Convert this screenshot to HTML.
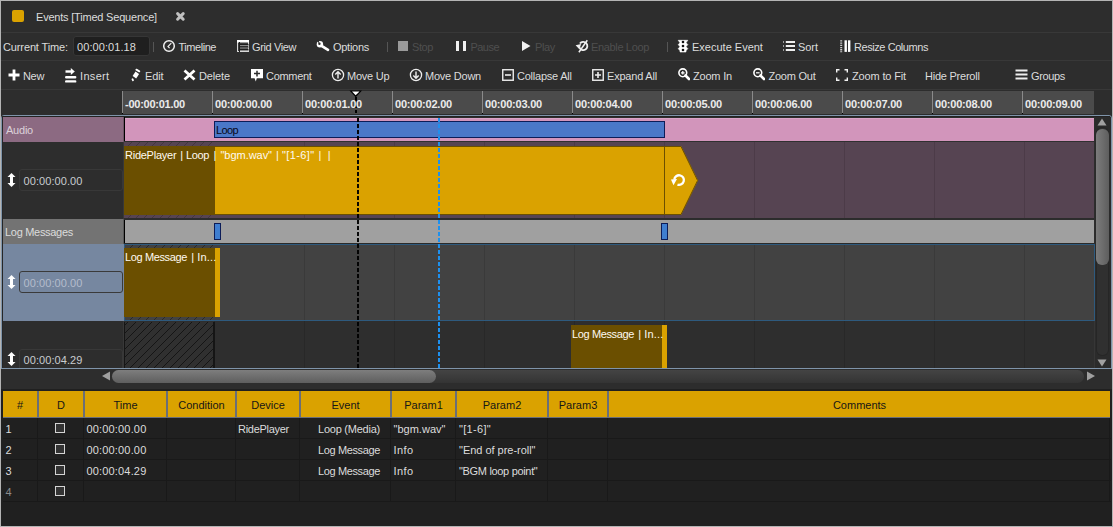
<!DOCTYPE html>
<html><head><meta charset="utf-8"><style>
html,body{margin:0;padding:0;}
body{width:1113px;height:527px;position:relative;overflow:hidden;background:#2d2d2d;font-family:"Liberation Sans",sans-serif;font-size:11px;}
body>div,body>svg{position:absolute;}
.t{white-space:nowrap;line-height:13px;height:13px;}
#win{left:0;top:0;width:1111px;height:525px;border:1px solid #b4b4b4;}
</style></head><body>
<div id="win"></div>
<div style="left:12px;top:10px;width:12px;height:12px;background:#daa200;border-radius:2px"></div>
<div class="t" style="left:36px;top:10.69px;color:#dcdcdc;letter-spacing:-0.202px;font-size:11px;">Events [Timed Sequence]</div>
<svg style="left:175px;top:11px;" width="11" height="11" viewBox="0 0 11 11"><path d="M2.6 2.6L8.2 8.2M8.2 2.6L2.6 8.2" stroke="#c0c0c0" stroke-width="3" stroke-linecap="round"/></svg>
<div style="left:1px;top:32px;width:1111px;height:1px;background:#383838;"></div>
<div class="t" style="left:3px;top:40.69px;color:#dcdcdc;letter-spacing:-0.126px;font-size:11px;">Current Time:</div>
<div style="left:73px;top:36px;width:77px;height:20px;background:#1f1f1f;border-radius:3px;box-sizing:border-box;border:1px solid #363636"></div>
<div class="t" style="left:77px;top:40.69px;color:#dcdcdc;letter-spacing:0.074px;font-size:11px;">00:00:01.18</div>
<div style="left:153px;top:42px;width:1px;height:10px;background:#555;"></div>
<svg style="left:162px;top:39px;" width="14" height="14" viewBox="0 0 14 14"><circle cx="7" cy="7" r="5.3" fill="none" stroke="#f0f0f0" stroke-width="1.5"/><path d="M9.3 4.2L6 7.6L7.6 9.2" stroke="#f0f0f0" stroke-width="1.2" fill="none"/></svg>
<div class="t" style="left:178.5px;top:40.69px;color:#dcdcdc;letter-spacing:-0.457px;font-size:11px;">Timeline</div>
<svg style="left:237px;top:40px;" width="12" height="12" viewBox="0 0 12 12"><rect x="0.5" y="0.5" width="11" height="11" fill="#3a3a3a" stroke="#d8d8d8"/><rect x="0" y="0" width="12" height="2.5" fill="#fff"/><path d="M2.5 2v10" stroke="#1e1e1e"/><path d="M3 4.5h8.5M3 7h8.5M3 9.5h8.5" stroke="#1e1e1e"/><path d="M3 5.5h8.5M3 8h8.5M3 10.5h8.5" stroke="#8a8a8a"/></svg>
<div class="t" style="left:252px;top:40.69px;color:#dcdcdc;letter-spacing:-0.387px;font-size:11px;">Grid View</div>
<svg style="left:316px;top:39px;" width="15" height="14" viewBox="0 0 15 14"><circle cx="3.9" cy="5.3" r="3.2" fill="#fff"/><path d="M4.8 6.3L12 10.8" stroke="#fff" stroke-width="2.7" stroke-linecap="round"/><circle cx="3.4" cy="4.8" r="1.2" fill="#2d2d2d"/><path d="M3.6 5L0.6 1.6L2.6 0.4Z" fill="#2d2d2d"/></svg>
<div class="t" style="left:333px;top:40.69px;color:#dcdcdc;letter-spacing:-0.277px;font-size:11px;">Options</div>
<div style="left:387px;top:42px;width:1px;height:10px;background:#555;"></div>
<div style="left:398px;top:41px;width:10px;height:10px;background:#9a9a9a;"></div>
<div class="t" style="left:412px;top:40.69px;color:#4f4f4f;letter-spacing:-0.414px;font-size:11px;">Stop</div>
<div style="left:456px;top:41px;width:3px;height:10px;background:#f0f0f0;"></div>
<div style="left:463px;top:41px;width:3px;height:10px;background:#f0f0f0;"></div>
<div class="t" style="left:470.5px;top:40.69px;color:#4f4f4f;letter-spacing:-0.544px;font-size:11px;">Pause</div>
<svg style="left:521px;top:40px;" width="10" height="12" viewBox="0 0 10 12"><path d="M1 1L9.5 6L1 11Z" fill="#f0f0f0"/></svg>
<div class="t" style="left:535px;top:40.69px;color:#4f4f4f;letter-spacing:-0.352px;font-size:11px;">Play</div>
<svg style="left:575px;top:39px;" width="14" height="14" viewBox="0 0 14 14"><path d="M4.9 4.6A4.1 4.1 0 1 1 4.4 8.4" stroke="#f0f0f0" stroke-width="1.8" fill="none"/><path d="M0.6 6.2L6.2 5.1L4.4 10.2Z" fill="#f0f0f0"/><path d="M12.3 1.2L3.9 13.3" stroke="#f0f0f0" stroke-width="1.5"/></svg>
<div class="t" style="left:591px;top:40.69px;color:#4f4f4f;letter-spacing:-0.349px;font-size:11px;">Enable Loop</div>
<div style="left:667px;top:42px;width:1px;height:10px;background:#555;"></div>
<svg style="left:677px;top:39px;" width="12" height="14" viewBox="0 0 12 14"><path d="M1.2 1.3H10.8L9 3.8L10.8 5.6L9 7.8L10.8 9.6L9 11.8V13H3V11.8L1.2 9.6L3 7.8L1.2 5.6L3 3.8Z" fill="#fff" stroke="#fff" stroke-width="0.6" stroke-linejoin="round"/><circle cx="6" cy="3" r="1.3" fill="#111"/><circle cx="6" cy="7" r="1.3" fill="#111"/><circle cx="6" cy="11" r="1.3" fill="#111"/></svg>
<div class="t" style="left:692px;top:40.69px;color:#dcdcdc;letter-spacing:0.000px;font-size:11px;">Execute Event</div>
<svg style="left:783px;top:40px;" width="13" height="13" viewBox="0 0 13 13"><path d="M2.8 2h9.2M2.8 6h9.2M2.8 10h9.2" stroke="#eee" stroke-width="1.8"/><path d="M0.5 1.2v1.6M0.5 5.2v1.6M0.5 9.2v1.6" stroke="#bbb" stroke-width="1"/></svg>
<div class="t" style="left:798px;top:40.69px;color:#dcdcdc;letter-spacing:-0.047px;font-size:11px;">Sort</div>
<svg style="left:839px;top:40px;" width="12" height="13" viewBox="0 0 12 13"><path d="M2.2 0.3v12" stroke="#ccc" stroke-width="2" stroke-dasharray="1.3 0.9"/><rect x="5.5" y="0.3" width="2.4" height="11.6" fill="#fff"/><rect x="9" y="0.3" width="2.4" height="11.6" fill="#fff"/></svg>
<div class="t" style="left:854px;top:40.69px;color:#dcdcdc;letter-spacing:-0.435px;font-size:11px;">Resize Columns</div>
<div style="left:1px;top:60px;width:1111px;height:1px;background:#383838;"></div>
<svg style="left:8px;top:69px;" width="12" height="12" viewBox="0 0 12 12"><path d="M6 0.5v11M0.5 6h11" stroke="#fff" stroke-width="2.8"/></svg>
<div class="t" style="left:23px;top:69.69px;color:#dcdcdc;letter-spacing:-0.333px;font-size:11px;">New</div>
<svg style="left:65px;top:68px;" width="12" height="15" viewBox="0 0 12 15"><path d="M0.5 3.5h6" stroke="#fff" stroke-width="2.4"/><path d="M5.8 0L9.8 3.5L5.8 7Z" fill="#fff"/><path d="M1.2 9.2h9M1.2 13.4h9" stroke="#fff" stroke-width="2.4" stroke-linecap="round"/></svg>
<div class="t" style="left:80px;top:69.69px;color:#dcdcdc;letter-spacing:0.328px;font-size:11px;">Insert</div>
<svg style="left:130px;top:68px;" width="11" height="14" viewBox="0 0 11 14"><path d="M6.4 1.7L9.3 3.3" stroke="#fff" stroke-width="1.9" stroke-linecap="round"/><path d="M7.3 4.8L4.4 9.2" stroke="#fff" stroke-width="4.3"/><path d="M2.5 11.3L3 12.2" stroke="#fff" stroke-width="1.8" stroke-linecap="round"/></svg>
<div class="t" style="left:145px;top:69.69px;color:#dcdcdc;letter-spacing:-0.117px;font-size:11px;">Edit</div>
<svg style="left:183px;top:69px;" width="13" height="12" viewBox="0 0 13 12"><path d="M1.5 1.5L11.5 10.5M11.5 1.5L1.5 10.5" stroke="#fff" stroke-width="2.8"/></svg>
<div class="t" style="left:199px;top:69.69px;color:#dcdcdc;letter-spacing:-0.135px;font-size:11px;">Delete</div>
<svg style="left:251px;top:69px;" width="13" height="14" viewBox="0 0 13 14"><path d="M0 0h12v9.2h-6.2l-1 3.2-1.2-3.2H0Z" fill="#fff"/><path d="M6 1.8v5.8M3 4.6h6" stroke="#2d2d2d" stroke-width="1.5"/></svg>
<div class="t" style="left:266px;top:69.69px;color:#dcdcdc;letter-spacing:-0.312px;font-size:11px;">Comment</div>
<svg style="left:331px;top:68px;" width="14" height="14" viewBox="0 0 14 14"><circle cx="7" cy="7" r="5.6" fill="none" stroke="#eee" stroke-width="1.3"/><path d="M7 10.5V4M4.3 6.5L7 3.7l2.7 2.8" stroke="#eee" stroke-width="1.4" fill="none"/></svg>
<div class="t" style="left:347px;top:69.69px;color:#dcdcdc;letter-spacing:-0.219px;font-size:11px;">Move Up</div>
<svg style="left:409px;top:68px;" width="14" height="14" viewBox="0 0 14 14"><circle cx="7" cy="7" r="5.6" fill="none" stroke="#eee" stroke-width="1.3"/><path d="M7 3.5V10M4.3 7.5L7 10.3l2.7-2.8" stroke="#eee" stroke-width="1.4" fill="none"/></svg>
<div class="t" style="left:425px;top:69.69px;color:#dcdcdc;letter-spacing:-0.233px;font-size:11px;">Move Down</div>
<svg style="left:502px;top:69px;" width="12" height="12" viewBox="0 0 12 12"><rect x="0.75" y="0.75" width="10.5" height="10.5" fill="none" stroke="#eee" stroke-width="1.4"/><path d="M3 6h6" stroke="#eee" stroke-width="1.6"/></svg>
<div class="t" style="left:517px;top:69.69px;color:#dcdcdc;letter-spacing:-0.232px;font-size:11px;">Collapse All</div>
<svg style="left:592px;top:69px;" width="12" height="12" viewBox="0 0 12 12"><rect x="0.75" y="0.75" width="10.5" height="10.5" fill="none" stroke="#eee" stroke-width="1.4"/><path d="M3 6h6M6 3v6" stroke="#eee" stroke-width="1.6"/></svg>
<div class="t" style="left:607px;top:69.69px;color:#dcdcdc;letter-spacing:-0.202px;font-size:11px;">Expand All</div>
<svg style="left:678px;top:68px;" width="12" height="13" viewBox="0 0 12 13"><circle cx="4.8" cy="4.8" r="3.9" fill="none" stroke="#fff" stroke-width="1.6"/><path d="M7.5 7.5L11 11" stroke="#fff" stroke-width="2.6" stroke-linecap="round"/><path d="M4.8 3v3.6M3 4.8h3.6" stroke="#fff" stroke-width="1.2"/></svg>
<div class="t" style="left:693px;top:69.69px;color:#dcdcdc;letter-spacing:-0.196px;font-size:11px;">Zoom In</div>
<svg style="left:753px;top:68px;" width="12" height="13" viewBox="0 0 12 13"><circle cx="4.8" cy="4.8" r="3.9" fill="none" stroke="#fff" stroke-width="1.6"/><path d="M7.5 7.5L11 11" stroke="#fff" stroke-width="2.6" stroke-linecap="round"/><path d="M3 4.8h3.6" stroke="#fff" stroke-width="1.2"/></svg>
<div class="t" style="left:768.5px;top:69.69px;color:#dcdcdc;letter-spacing:-0.242px;font-size:11px;">Zoom Out</div>
<svg style="left:836px;top:69px;" width="12" height="12" viewBox="0 0 12 12"><path d="M0 0h3.5v1.4H1.4v2.1H0ZM12 0H8.5v1.4h2.1v2.1H12ZM0 12h3.5v-1.4H1.4V8.5H0ZM12 12H8.5v-1.4h2.1V8.5H12Z" fill="#f2f2f2"/></svg>
<div class="t" style="left:852px;top:69.69px;color:#dcdcdc;letter-spacing:-0.151px;font-size:11px;">Zoom to Fit</div>
<div class="t" style="left:925px;top:69.69px;color:#dcdcdc;letter-spacing:-0.239px;font-size:11px;">Hide Preroll</div>
<svg style="left:1015px;top:69px;" width="13" height="11" viewBox="0 0 13 11"><path d="M0.5 1.5h12M0.5 5.5h12M0.5 9.5h12" stroke="#eee" stroke-width="2"/></svg>
<div class="t" style="left:1031px;top:69.69px;color:#dcdcdc;letter-spacing:-0.349px;font-size:11px;">Groups</div>
<div style="left:1px;top:89px;width:1111px;height:1px;background:#383838;"></div>
<div style="left:123px;top:91px;width:971px;height:23px;background:#4b4b4b;"></div>
<div style="left:122px;top:91px;width:1px;height:22px;background:#8a8a8a;"></div>
<div style="left:122px;top:113px;width:1px;height:1px;background:#000;"></div>
<div style="left:212px;top:91px;width:1px;height:22px;background:#8a8a8a;"></div>
<div style="left:212px;top:113px;width:1px;height:1px;background:#000;"></div>
<div style="left:302px;top:91px;width:1px;height:22px;background:#8a8a8a;"></div>
<div style="left:302px;top:113px;width:1px;height:1px;background:#000;"></div>
<div style="left:392px;top:91px;width:1px;height:22px;background:#8a8a8a;"></div>
<div style="left:392px;top:113px;width:1px;height:1px;background:#000;"></div>
<div style="left:482px;top:91px;width:1px;height:22px;background:#8a8a8a;"></div>
<div style="left:482px;top:113px;width:1px;height:1px;background:#000;"></div>
<div style="left:572px;top:91px;width:1px;height:22px;background:#8a8a8a;"></div>
<div style="left:572px;top:113px;width:1px;height:1px;background:#000;"></div>
<div style="left:662px;top:91px;width:1px;height:22px;background:#8a8a8a;"></div>
<div style="left:662px;top:113px;width:1px;height:1px;background:#000;"></div>
<div style="left:752px;top:91px;width:1px;height:22px;background:#8a8a8a;"></div>
<div style="left:752px;top:113px;width:1px;height:1px;background:#000;"></div>
<div style="left:842px;top:91px;width:1px;height:22px;background:#8a8a8a;"></div>
<div style="left:842px;top:113px;width:1px;height:1px;background:#000;"></div>
<div style="left:932px;top:91px;width:1px;height:22px;background:#8a8a8a;"></div>
<div style="left:932px;top:113px;width:1px;height:1px;background:#000;"></div>
<div style="left:1022px;top:91px;width:1px;height:22px;background:#8a8a8a;"></div>
<div style="left:1022px;top:113px;width:1px;height:1px;background:#000;"></div>
<svg style="left:349px;top:90px" width="14" height="8"><path d="M0.5 0.5H13L6.7 7.2Z" fill="#000"/><path d="M3 1.5H10.5L6.7 5.3Z" fill="#fff"/></svg>
<div style="left:355px;top:97px;width:2px;height:11px;background:#000;"></div>
<div style="left:355px;top:110px;width:2px;height:3px;background:#000;"></div>
<div class="t" style="left:125px;top:97.69px;color:#ececec;letter-spacing:-0.253px;font-size:11px;font-weight:bold;">-00:00:01.00</div>
<div class="t" style="left:215px;top:97.69px;color:#ececec;letter-spacing:-0.216px;font-size:11px;font-weight:bold;">00:00:00.00</div>
<div class="t" style="left:305px;top:97.69px;color:#ececec;letter-spacing:-0.216px;font-size:11px;font-weight:bold;">00:00:01.00</div>
<div class="t" style="left:395px;top:97.69px;color:#ececec;letter-spacing:-0.216px;font-size:11px;font-weight:bold;">00:00:02.00</div>
<div class="t" style="left:485px;top:97.69px;color:#ececec;letter-spacing:-0.216px;font-size:11px;font-weight:bold;">00:00:03.00</div>
<div class="t" style="left:575px;top:97.69px;color:#ececec;letter-spacing:-0.216px;font-size:11px;font-weight:bold;">00:00:04.00</div>
<div class="t" style="left:665px;top:97.69px;color:#ececec;letter-spacing:-0.216px;font-size:11px;font-weight:bold;">00:00:05.00</div>
<div class="t" style="left:755px;top:97.69px;color:#ececec;letter-spacing:-0.216px;font-size:11px;font-weight:bold;">00:00:06.00</div>
<div class="t" style="left:845px;top:97.69px;color:#ececec;letter-spacing:-0.216px;font-size:11px;font-weight:bold;">00:00:07.00</div>
<div class="t" style="left:935px;top:97.69px;color:#ececec;letter-spacing:-0.216px;font-size:11px;font-weight:bold;">00:00:08.00</div>
<div class="t" style="left:1025px;top:97.69px;color:#ececec;letter-spacing:-0.216px;font-size:11px;font-weight:bold;">00:00:09.00</div>
<div style="left:1px;top:115px;width:1109px;height:252px;border:1px solid #7f94aa;border-radius:3px 3px 0 0;"></div>
<div style="left:2px;top:116px;width:1108px;height:1px;background:#232323;"></div>
<div style="left:2px;top:116px;width:1px;height:252px;background:#262626;"></div>
<div style="left:3px;top:117px;width:120px;height:25px;background:#8c6a82;"></div>
<div style="left:123px;top:117px;width:1px;height:25px;background:#6e5566;"></div>
<div style="left:124px;top:117px;width:1px;height:24px;background:#000;"></div>
<div style="left:125px;top:118px;width:969px;height:23px;background:#d295bb;"></div>
<div style="left:125px;top:118px;width:969px;height:1px;background:#dca4c8;"></div>
<div style="left:124px;top:141px;width:970px;height:1px;background:#303030;"></div>
<div class="t" style="left:6px;top:123.69px;color:#dcd2da;letter-spacing:-0.231px;font-size:11px;">Audio</div>
<div style="left:214px;top:121px;width:451px;height:17px;background:#4a78c8;box-sizing:border-box;border:1px solid #0c1c58"></div>
<div class="t" style="left:216px;top:123.69px;color:#080818;letter-spacing:-0.625px;font-size:11px;">Loop</div>
<div style="left:123px;top:142px;width:1px;height:77px;background:#383838;"></div>
<div style="left:124px;top:142px;width:970px;height:76px;background:#564452;"></div>
<div style="left:214px;top:142px;width:1px;height:76px;background:#4c3b48;"></div>
<div style="left:304px;top:142px;width:1px;height:76px;background:#4c3b48;"></div>
<div style="left:394px;top:142px;width:1px;height:76px;background:#4c3b48;"></div>
<div style="left:484px;top:142px;width:1px;height:76px;background:#4c3b48;"></div>
<div style="left:574px;top:142px;width:1px;height:76px;background:#4c3b48;"></div>
<div style="left:664px;top:142px;width:1px;height:76px;background:#4c3b48;"></div>
<div style="left:754px;top:142px;width:1px;height:76px;background:#4c3b48;"></div>
<div style="left:844px;top:142px;width:1px;height:76px;background:#4c3b48;"></div>
<div style="left:934px;top:142px;width:1px;height:76px;background:#4c3b48;"></div>
<div style="left:1024px;top:142px;width:1px;height:76px;background:#4c3b48;"></div>
<div style="left:124px;top:218px;width:970px;height:1px;background:#2c2c2c;"></div>
<svg style="left:124px;top:142px" width="91" height="4"><defs><pattern id="h1" patternUnits="userSpaceOnUse" width="8" height="8" x="6" y="2"><path d="M0 8L8 0M-2 2L2 -2M6 10L10 6" stroke="#45363f" stroke-width="1"/></pattern></defs><rect width="91" height="4" fill="#564452"/><rect width="91" height="4" fill="url(#h1)"/></svg>
<svg style="left:124px;top:215px" width="91" height="3"><defs><pattern id="h2" patternUnits="userSpaceOnUse" width="8" height="8" x="6" y="1"><path d="M0 8L8 0M-2 2L2 -2M6 10L10 6" stroke="#45363f" stroke-width="1"/></pattern></defs><rect width="91" height="3" fill="#564452"/><rect width="91" height="3" fill="url(#h2)"/></svg>
<div style="left:124px;top:146px;width:91px;height:69px;background:#6b4f00;"></div>
<svg style="left:215px;top:146px" width="484" height="69"><path d="M0 0H466L483 34.5L466 69H0Z" fill="#daa200"/><path d="M0 0.5H466L482.6 34.5L466 68.5H0" fill="none" stroke="#6b5000" stroke-width="1"/><rect x="449" y="0" width="1" height="69" fill="#6b4f00"/><path d="M459.3 33.6A4.8 4.8 0 1 1 462.5 38.6" stroke="#fff" stroke-width="2.3" fill="none"/><path d="M456 33.4L462 32.9L458.5 39.3Z" fill="#fff"/></svg>
<div class="t" style="left:125px;top:148.69px;color:#fffaf0;letter-spacing:-0.251px;font-size:11px;">RidePlayer</div>
<div class="t" style="left:180.2px;top:148.69px;color:#fffaf0;letter-spacing:0.000px;font-size:11px;">|</div>
<div class="t" style="left:186px;top:148.69px;color:#fffaf0;letter-spacing:-0.375px;font-size:11px;">Loop</div>
<div class="t" style="left:213.4px;top:148.69px;color:#fffaf0;letter-spacing:0.000px;font-size:11px;">|</div>
<div class="t" style="left:220.5px;top:148.69px;color:#fffaf0;letter-spacing:-0.038px;font-size:11px;">&quot;bgm.wav&quot;</div>
<div class="t" style="left:275.9px;top:148.69px;color:#fffaf0;letter-spacing:0.000px;font-size:11px;">|</div>
<div class="t" style="left:282px;top:148.69px;color:#fffaf0;letter-spacing:0.379px;font-size:11px;">&quot;[1-6]&quot;</div>
<div class="t" style="left:318.5px;top:148.69px;color:#fffaf0;letter-spacing:0.000px;font-size:11px;">|</div>
<div class="t" style="left:327.8px;top:148.69px;color:#fffaf0;letter-spacing:0.000px;font-size:11px;">|</div>
<div style="left:19px;top:169px;width:102px;height:20px;border:1px solid #383838;border-radius:3px;"></div>
<div class="t" style="left:23.5px;top:174.69px;color:#c8ccd0;letter-spacing:0.074px;font-size:11px;">00:00:00.00</div>
<svg style="left:7px;top:173px;" width="9" height="14" viewBox="0 0 9 14"><path d="M4.5 0L8.5 4H6V10H8.5L4.5 14L0.5 10H3V4H0.5Z" fill="#fff"/></svg>
<div style="left:3px;top:219px;width:120px;height:25px;background:#737373;"></div>
<div style="left:123px;top:219px;width:1px;height:25px;background:#5a5a5a;"></div>
<div style="left:124px;top:220px;width:1px;height:23px;background:#000;"></div>
<div style="left:125px;top:220px;width:969px;height:23px;background:#a0a0a0;"></div>
<div style="left:124px;top:243px;width:970px;height:1px;background:#2a2a2a;"></div>
<div class="t" style="left:5px;top:225.69px;color:#dcdcdc;letter-spacing:-0.299px;font-size:11px;">Log Messages</div>
<div style="left:214px;top:223px;width:7px;height:17px;background:#3f7ed0;box-sizing:border-box;border:1px solid #0c1c58"></div>
<div style="left:661px;top:223px;width:7px;height:17px;background:#3f7ed0;box-sizing:border-box;border:1px solid #0c1c58"></div>
<div style="left:3px;top:244px;width:121px;height:77px;background:#7687a0;"></div>
<div style="left:124px;top:244px;width:971px;height:77px;background:#424242;box-sizing:border-box;border:1px solid #2e5a7e"></div>
<div style="left:214px;top:245px;width:1px;height:75px;background:#3a3a3a;"></div>
<div style="left:304px;top:245px;width:1px;height:75px;background:#3a3a3a;"></div>
<div style="left:394px;top:245px;width:1px;height:75px;background:#3a3a3a;"></div>
<div style="left:484px;top:245px;width:1px;height:75px;background:#3a3a3a;"></div>
<div style="left:574px;top:245px;width:1px;height:75px;background:#3a3a3a;"></div>
<div style="left:664px;top:245px;width:1px;height:75px;background:#3a3a3a;"></div>
<div style="left:754px;top:245px;width:1px;height:75px;background:#3a3a3a;"></div>
<div style="left:844px;top:245px;width:1px;height:75px;background:#3a3a3a;"></div>
<div style="left:934px;top:245px;width:1px;height:75px;background:#3a3a3a;"></div>
<div style="left:1024px;top:245px;width:1px;height:75px;background:#3a3a3a;"></div>
<svg style="left:125px;top:245px" width="90" height="3"><defs><pattern id="h3" patternUnits="userSpaceOnUse" width="8" height="8" x="5" y="3"><path d="M0 8L8 0M-2 2L2 -2M6 10L10 6" stroke="#2a2a2a" stroke-width="1"/></pattern></defs><rect width="90" height="3" fill="#424242"/><rect width="90" height="3" fill="url(#h3)"/></svg>
<svg style="left:125px;top:317px" width="90" height="3"><defs><pattern id="h4" patternUnits="userSpaceOnUse" width="8" height="8" x="5" y="3"><path d="M0 8L8 0M-2 2L2 -2M6 10L10 6" stroke="#2a2a2a" stroke-width="1"/></pattern></defs><rect width="90" height="3" fill="#424242"/><rect width="90" height="3" fill="url(#h4)"/></svg>
<div style="left:124px;top:248px;width:91px;height:69px;background:#6b4f00;"></div>
<div style="left:215px;top:248px;width:5px;height:69px;background:#daa200;"></div>
<div class="t" style="left:125px;top:250.69px;color:#fffaf0;letter-spacing:-0.372px;font-size:11px;">Log Message</div>
<div class="t" style="left:191.3px;top:250.69px;color:#fffaf0;letter-spacing:0.000px;font-size:11px;">|</div>
<div class="t" style="left:197.3px;top:250.69px;color:#fffaf0;letter-spacing:0.165px;font-size:11px;">In...</div>
<div style="left:19px;top:271px;width:102px;height:20px;border:1px solid #3a3a3a;border-radius:3px;"></div>
<div class="t" style="left:23.5px;top:276.69px;color:#b4bccc;letter-spacing:0.074px;font-size:11px;">00:00:00.00</div>
<svg style="left:7px;top:275px;" width="9" height="14" viewBox="0 0 9 14"><path d="M4.5 0L8.5 4H6V10H8.5L4.5 14L0.5 10H3V4H0.5Z" fill="#fff"/></svg>
<div style="left:123px;top:321px;width:1px;height:47px;background:#383838;"></div>
<div style="left:124px;top:321px;width:970px;height:47px;background:#2e2e2e;"></div>
<div style="left:214px;top:321px;width:1px;height:47px;background:#282828;"></div>
<div style="left:304px;top:321px;width:1px;height:47px;background:#282828;"></div>
<div style="left:394px;top:321px;width:1px;height:47px;background:#282828;"></div>
<div style="left:484px;top:321px;width:1px;height:47px;background:#282828;"></div>
<div style="left:574px;top:321px;width:1px;height:47px;background:#282828;"></div>
<div style="left:664px;top:321px;width:1px;height:47px;background:#282828;"></div>
<div style="left:754px;top:321px;width:1px;height:47px;background:#282828;"></div>
<div style="left:844px;top:321px;width:1px;height:47px;background:#282828;"></div>
<div style="left:934px;top:321px;width:1px;height:47px;background:#282828;"></div>
<div style="left:1024px;top:321px;width:1px;height:47px;background:#282828;"></div>
<svg style="left:124px;top:322px" width="91" height="46"><defs><pattern id="h5" patternUnits="userSpaceOnUse" width="8" height="8" x="6" y="6"><path d="M0 8L8 0M-2 2L2 -2M6 10L10 6" stroke="#151515" stroke-width="1"/></pattern></defs><rect width="91" height="46" fill="#303030"/><rect width="91" height="46" fill="url(#h5)"/></svg>
<div style="left:124px;top:322px;width:1px;height:46px;background:#151515;"></div>
<div style="left:213px;top:322px;width:2px;height:46px;background:#151515;"></div>
<div style="left:571px;top:325px;width:91px;height:43px;background:#6b4f00;"></div>
<div style="left:662px;top:325px;width:5px;height:43px;background:#daa200;"></div>
<div class="t" style="left:572px;top:327.69px;color:#fffaf0;letter-spacing:-0.372px;font-size:11px;">Log Message</div>
<div class="t" style="left:638.3px;top:327.69px;color:#fffaf0;letter-spacing:0.000px;font-size:11px;">|</div>
<div class="t" style="left:644.3px;top:327.69px;color:#fffaf0;letter-spacing:0.165px;font-size:11px;">In...</div>
<div style="left:19px;top:349px;width:102px;height:30px;border:1px solid #383838;border-radius:3px;"></div>
<div class="t" style="left:23.5px;top:353.69px;color:#c8ccd0;letter-spacing:0.074px;font-size:11px;">00:00:04.29</div>
<svg style="left:7px;top:352px;" width="9" height="14" viewBox="0 0 9 14"><path d="M4.5 0L8.5 4H6V10H8.5L4.5 14L0.5 10H3V4H0.5Z" fill="#fff"/></svg>
<div style="left:357px;top:118px;width:2px;height:250px;background:repeating-linear-gradient(to bottom,rgba(0,0,0,.95) 0 4px,transparent 4px 6px)"></div>
<div style="left:438px;top:118px;width:2px;height:250px;background:repeating-linear-gradient(to bottom,#1e90ee 0 4px,transparent 4px 6px)"></div>
<div style="left:1095px;top:117px;width:16px;height:251px;background:#2b2b2b;"></div>
<div style="left:1096px;top:127px;width:13px;height:229px;background:#303030;border-radius:6px;box-shadow:inset 0 0 0 1px #262626"></div>
<div style="left:1096px;top:129px;width:13px;height:136px;background:linear-gradient(to right,#7c7c7c,#5e5e5e);border-radius:6px"></div>
<div style="left:1094px;top:321px;width:1px;height:47px;background:#363636;"></div>
<svg style="left:1097px;top:118px;" width="10" height="8" viewBox="0 0 10 8"><path d="M5 0.5L9.5 7.5H0.5Z" fill="#a0a0a0"/></svg>
<svg style="left:1097px;top:359px;" width="10" height="8" viewBox="0 0 10 8"><path d="M5 7.5L9.5 0.5H0.5Z" fill="#a0a0a0"/></svg>
<div style="left:2px;top:369px;width:1109px;height:21px;background:#2d2d2d;"></div>
<div style="left:1px;top:368px;width:1111px;height:1px;background:#7f94aa"></div>
<div style="left:112px;top:370px;width:972px;height:13px;background:linear-gradient(to bottom,#444,#343434);border-radius:6.5px"></div>
<div style="left:112px;top:370px;width:324px;height:13px;background:linear-gradient(to bottom,#7e7e7e,#5e5e5e);border-radius:6.5px"></div>
<svg style="left:101px;top:371px;" width="10" height="10" viewBox="0 0 10 10"><path d="M1 5L9 0.5V9.5Z" fill="#a0a0a0"/></svg>
<svg style="left:1086px;top:371px;" width="10" height="10" viewBox="0 0 10 10"><path d="M9 5L1 0.5V9.5Z" fill="#a0a0a0"/></svg>
<div style="left:1px;top:389px;width:1111px;height:137px;background:#202020;"></div>
<div style="left:3px;top:391px;width:1107px;height:26px;background:#daa200;"></div>
<div style="left:3px;top:417px;width:1107px;height:1px;background:#6a6e78;"></div>
<div style="left:37px;top:391px;width:2px;height:27px;background:#6a6e78;"></div>
<div style="left:83px;top:391px;width:2px;height:27px;background:#6a6e78;"></div>
<div style="left:166px;top:391px;width:2px;height:27px;background:#6a6e78;"></div>
<div style="left:235px;top:391px;width:2px;height:27px;background:#6a6e78;"></div>
<div style="left:299px;top:391px;width:2px;height:27px;background:#6a6e78;"></div>
<div style="left:390px;top:391px;width:2px;height:27px;background:#6a6e78;"></div>
<div style="left:455px;top:391px;width:2px;height:27px;background:#6a6e78;"></div>
<div style="left:547px;top:391px;width:2px;height:27px;background:#6a6e78;"></div>
<div style="left:607px;top:391px;width:2px;height:27px;background:#6a6e78;"></div>
<div class="t" style="left:3px;top:399.29px;width:34px;text-align:center;color:#161616;">#</div>
<div class="t" style="left:39px;top:399.29px;width:44px;text-align:center;color:#161616;">D</div>
<div class="t" style="left:85px;top:399.29px;width:81px;text-align:center;color:#161616;">Time</div>
<div class="t" style="left:168px;top:399.29px;width:67px;text-align:center;color:#161616;">Condition</div>
<div class="t" style="left:237px;top:399.29px;width:62px;text-align:center;color:#161616;">Device</div>
<div class="t" style="left:301px;top:399.29px;width:89px;text-align:center;color:#161616;">Event</div>
<div class="t" style="left:392px;top:399.29px;width:63px;text-align:center;color:#161616;">Param1</div>
<div class="t" style="left:457px;top:399.29px;width:90px;text-align:center;color:#161616;">Param2</div>
<div class="t" style="left:549px;top:399.29px;width:58px;text-align:center;color:#161616;">Param3</div>
<div class="t" style="left:609px;top:399.29px;width:501px;text-align:center;color:#161616;">Comments</div>
<div style="left:3px;top:438px;width:1108px;height:1px;background:#191919;"></div>
<div style="left:3px;top:459px;width:1108px;height:1px;background:#191919;"></div>
<div style="left:3px;top:480px;width:1108px;height:1px;background:#191919;"></div>
<div style="left:3px;top:501px;width:1108px;height:1px;background:#191919;"></div>
<div style="left:37px;top:418px;width:1px;height:84px;background:#191919;"></div>
<div style="left:83px;top:418px;width:1px;height:84px;background:#191919;"></div>
<div style="left:166px;top:418px;width:1px;height:84px;background:#191919;"></div>
<div style="left:235px;top:418px;width:1px;height:84px;background:#191919;"></div>
<div style="left:299px;top:418px;width:1px;height:84px;background:#191919;"></div>
<div style="left:390px;top:418px;width:1px;height:84px;background:#191919;"></div>
<div style="left:455px;top:418px;width:1px;height:84px;background:#191919;"></div>
<div style="left:547px;top:418px;width:1px;height:84px;background:#191919;"></div>
<div style="left:607px;top:418px;width:1px;height:84px;background:#191919;"></div>
<div style="left:1109px;top:418px;width:1px;height:84px;background:#191919;"></div>
<div class="t" style="left:5.5px;top:422.69px;color:#dcdcdc;letter-spacing:0.000px;font-size:11px;">1</div>
<div class="t" style="left:86.5px;top:422.69px;color:#dcdcdc;letter-spacing:0.165px;font-size:11px;">00:00:00.00</div>
<div class="t" style="left:238px;top:422.69px;color:#dcdcdc;letter-spacing:-0.281px;font-size:11px;">RidePlayer</div>
<div class="t" style="left:318px;top:422.69px;color:#dcdcdc;letter-spacing:-0.237px;font-size:11px;">Loop (Media)</div>
<div class="t" style="left:393.5px;top:422.69px;color:#dcdcdc;letter-spacing:0.017px;font-size:11px;">&quot;bgm.wav&quot;</div>
<div class="t" style="left:459px;top:422.69px;color:#dcdcdc;letter-spacing:0.308px;font-size:11px;">&quot;[1-6]&quot;</div>
<div class="t" style="left:5.5px;top:443.69px;color:#dcdcdc;letter-spacing:0.000px;font-size:11px;">2</div>
<div class="t" style="left:86.5px;top:443.69px;color:#dcdcdc;letter-spacing:0.165px;font-size:11px;">00:00:00.00</div>
<div class="t" style="left:318px;top:443.69px;color:#dcdcdc;letter-spacing:-0.372px;font-size:11px;">Log Message</div>
<div class="t" style="left:393.5px;top:443.69px;color:#dcdcdc;letter-spacing:0.406px;font-size:11px;">Info</div>
<div class="t" style="left:459px;top:443.69px;color:#dcdcdc;letter-spacing:-0.026px;font-size:11px;">&quot;End of pre-roll&quot;</div>
<div class="t" style="left:5.5px;top:464.69px;color:#dcdcdc;letter-spacing:0.000px;font-size:11px;">3</div>
<div class="t" style="left:86.5px;top:464.69px;color:#dcdcdc;letter-spacing:0.165px;font-size:11px;">00:00:04.29</div>
<div class="t" style="left:318px;top:464.69px;color:#dcdcdc;letter-spacing:-0.372px;font-size:11px;">Log Message</div>
<div class="t" style="left:393.5px;top:464.69px;color:#dcdcdc;letter-spacing:0.406px;font-size:11px;">Info</div>
<div class="t" style="left:459px;top:464.69px;color:#dcdcdc;letter-spacing:-0.324px;font-size:11px;">&quot;BGM loop point&quot;</div>
<div class="t" style="left:5.5px;top:485.69px;color:#8c8c8c;letter-spacing:0.000px;font-size:11px;">4</div>
<div style="left:55px;top:423px;width:10px;height:10px;background:#333;box-sizing:border-box;border:1px solid #d4d4d4"></div>
<div style="left:55px;top:444px;width:10px;height:10px;background:#333;box-sizing:border-box;border:1px solid #d4d4d4"></div>
<div style="left:55px;top:465px;width:10px;height:10px;background:#333;box-sizing:border-box;border:1px solid #d4d4d4"></div>
<div style="left:55px;top:486px;width:10px;height:10px;background:#333;box-sizing:border-box;border:1px solid #d4d4d4"></div>
</body></html>
